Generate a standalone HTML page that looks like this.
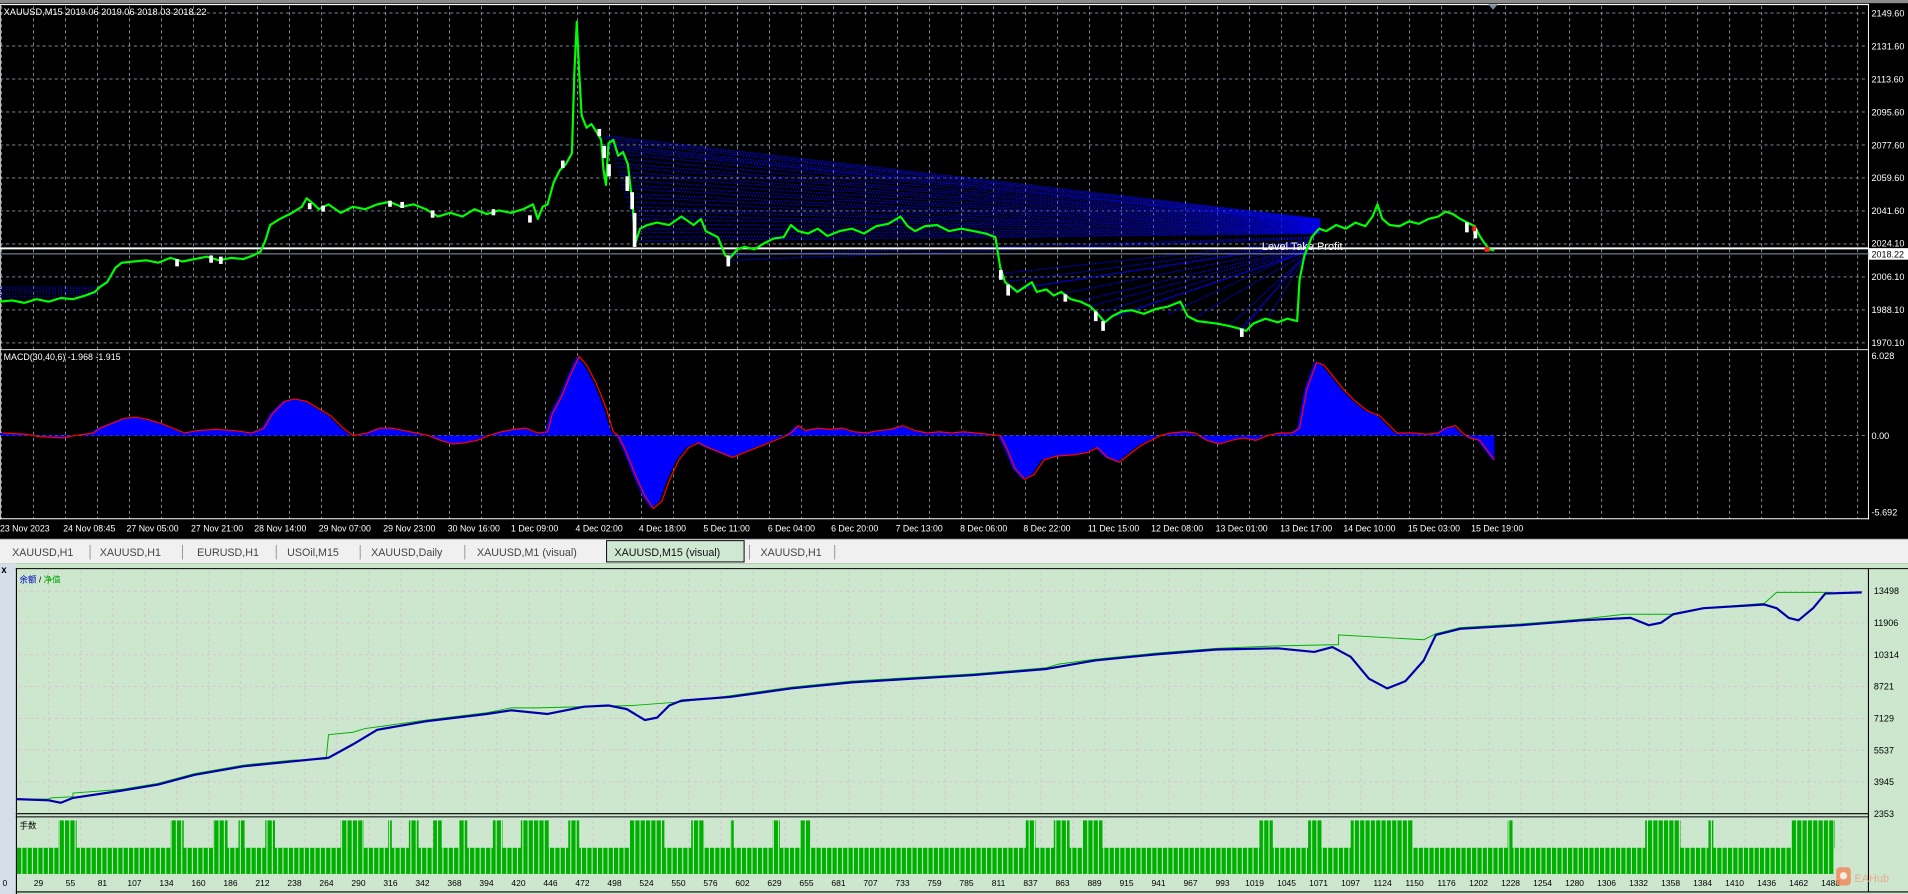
<!DOCTYPE html>
<html><head><meta charset="utf-8"><style>
html,body{margin:0;padding:0;background:#000;overflow:hidden}
svg{display:block}
text{font-family:"Liberation Sans","Noto Sans CJK SC",sans-serif}
</style></head><body>
<svg width="1908" height="894" viewBox="0 0 1568 735" preserveAspectRatio="none" xmlns="http://www.w3.org/2000/svg">
<defs>
<pattern id="gv" x="27.1" y="0" width="26.3" height="5" patternUnits="userSpaceOnUse"><rect x="0" y="0" width="0.8" height="2.5" fill="#7f8c99"/></pattern>
<pattern id="gh" x="0" y="10.3" width="5" height="27.12" patternUnits="userSpaceOnUse"><rect x="0" y="0" width="2.5" height="0.8" fill="#7f8c99"/></pattern>
<pattern id="bv" x="13.4" y="0" width="26.3" height="5" patternUnits="userSpaceOnUse"><rect x="0" y="0" width="0.8" height="2.5" fill="#d7c4cc"/></pattern>
<pattern id="bh" x="0" y="485.6" width="5" height="26.16" patternUnits="userSpaceOnUse"><rect x="0" y="0" width="2.5" height="0.8" fill="#d7c4cc"/></pattern>
<pattern id="vb" x="14" y="0" width="4.38" height="10" patternUnits="userSpaceOnUse"><rect x="0" y="0" width="3.5" height="10" fill="#00b000"/></pattern>
</defs>

<rect x="0" y="0" width="1568" height="444" fill="#000"/>
<rect x="0" y="0" width="1568" height="2.6" fill="#8c8c8c"/>
<rect x="0" y="3.2" width="1536" height="1" fill="#fff"/>
<rect x="0" y="4" width="1535" height="283" fill="url(#gv)"/>
<rect x="0" y="4" width="1535" height="283" fill="url(#gh)"/>
<rect x="0" y="289" width="1535" height="137" fill="url(#gv)"/>
<line x1="0" y1="358" x2="1535" y2="358" stroke="#7f8c99" stroke-width="0.8" stroke-dasharray="2.5 2.5"/>
<line x1="1535.5" y1="4" x2="1535.5" y2="427" stroke="#fff" stroke-width="0.8"/>
<line x1="0" y1="287.5" x2="1536" y2="287.5" stroke="#fff" stroke-width="0.8"/>
<line x1="0" y1="426.5" x2="1536" y2="426.5" stroke="#fff" stroke-width="0.8"/>
<line x1="0.5" y1="4" x2="0.5" y2="427" stroke="#fff" stroke-width="0.6"/>
<polygon points="1223,3.5 1231,3.5 1227,8" fill="#7f8c99"/>

<path d="M0 236L80 236M0 238L80 237M0 240L80 239M0 242L80 241M0 244L80 243" stroke="#0000ff" stroke-width="0.8" stroke-dasharray="1 1.5"/>

<path d="M500 112L1085 180M501 116L1085 180.5M502 119L1085 181M503 123L1085 181.5M504 126L1085 182M505 130L1085 182.5M506 134L1085 183M507 137L1085 183.5M508 141L1085 184M509 144L1085 184.5M510 148L1085 185M511 152L1085 185.5M512 155L1085 186M513 159L1085 186.5M514 162L1085 187M515 166L1085 187.5M516 170L1085 188M517 173L1085 188.5M518 177L1085 189M519 180L1085 189.5M520 184L1085 190M521 188L1085 190.5M522 191L1085 191M523 195L1085 191.5M524 198L1085 192M600 210L1080 195M598 214L1080 196M496 120L1085 183M494 113L1085 181M822 225L1075 198M826 232L1075 199M832 238L1075 200M845 236L1075 201M870 242L1075 202M885 248L1075 203M895 252L1075 204M900 258L1075 205M905 264L1075 206M915 260L1075 207M1018 272L1075 208M1022 270L1072 210M1010 268L1072 211M1040 264L1072 212M960 258L1072 206M980 262L1072 209" stroke="#0000ff" stroke-width="1.1" stroke-dasharray="1 1.3" fill="none"/>

<rect x="0" y="203.4" width="1536" height="1.6" fill="#fff"/>
<line x1="0" y1="208.7" x2="1536" y2="208.7" stroke="#8898a8" stroke-width="0.8"/>
<text x="1037" y="205.5" font-size="9" fill="#fff">Level Take Profit</text>

<polyline fill="none" stroke="#00ff00" stroke-width="1.8" stroke-linejoin="round" points="0,248 10,247 20,249 30,246 40,248 50,245 60,246 70,243 78,240 82,236 88,232 95,220 100,216 110,215 120,214 130,216 140,212 150,215 160,213 170,211 180,214 190,212 200,213 208,210 214,207 218,198 222,185 230,180 240,175 248,170 252,163 258,168 262,172 270,168 280,175 290,170 300,172 310,168 320,166 330,170 340,168 350,172 360,178 370,175 380,178 390,172 400,176 410,173 420,175 430,172 438,168 442,180 446,170 450,168 455,150 460,140 465,135 470,126 472,60 474,18 476,60 478,95 482,105 486,102 490,108 494,115 496,140 498,152 500,118 504,115 508,128 512,125 516,135 520,170 522,200 526,188 532,185 540,183 550,185 560,178 570,185 576,180 580,190 590,195 596,210 600,212 606,205 612,203 620,205 628,200 636,196 644,195 650,185 656,190 664,192 672,188 680,194 690,190 700,188 710,192 720,186 730,184 740,178 746,186 752,190 760,186 770,185 780,190 790,188 800,190 810,192 818,195 822,220 826,232 830,235 836,240 842,236 848,232 852,240 860,238 866,243 872,240 880,246 888,248 896,252 902,258 908,265 914,260 922,256 930,255 940,258 950,254 960,252 970,248 976,260 984,264 992,265 1000,266 1010,268 1018,270 1024,272 1030,266 1040,262 1050,265 1058,262 1066,264 1068,230 1072,210 1078,195 1084,188 1090,190 1098,185 1106,188 1114,183 1122,186 1128,178 1132,168 1136,180 1142,185 1150,186 1158,182 1166,184 1174,180 1182,178 1188,174 1194,176 1200,180 1206,183 1212,186 1216,194 1220,200 1224,205 1228,206"/>
<g fill="#fff">
<rect x="253" y="167" width="3" height="5"/><rect x="264" y="169" width="3" height="5"/><rect x="319" y="165" width="3" height="5"/><rect x="329" y="166" width="3" height="5"/><rect x="354" y="173" width="3" height="6"/><rect x="404" y="172" width="3" height="5"/><rect x="434" y="177" width="3" height="6"/><rect x="461" y="132" width="3" height="6"/><rect x="491" y="106" width="3" height="6"/><rect x="495" y="120" width="3" height="10"/><rect x="499" y="135" width="3" height="10"/><rect x="514" y="145" width="3" height="12"/><rect x="518" y="158" width="3" height="14"/><rect x="520" y="175" width="3" height="28"/><rect x="597" y="210" width="3" height="9"/><rect x="821" y="222" width="3" height="8"/><rect x="827" y="234" width="3" height="9"/><rect x="874" y="242" width="3" height="6"/><rect x="899" y="256" width="3" height="8"/><rect x="905" y="264" width="3" height="8"/><rect x="1019" y="270" width="3" height="7"/><rect x="1204" y="183" width="3" height="8"/><rect x="1211" y="188" width="3" height="8"/><rect x="144" y="213" width="3" height="6"/><rect x="172" y="210" width="3" height="6"/><rect x="180" y="211" width="3" height="6"/>
</g>
<g fill="#ff2020"><rect x="1220" y="203" width="4" height="4"/><rect x="1210" y="186" width="3" height="4"/></g>

<rect x="1536" y="204" width="32" height="9.5" fill="#fff"/>
<text x="1538" y="211.8" font-size="7.4" fill="#000">2018.22</text>

<g font-size="7.5" fill="#fff">
<text x="1538" y="13.5">2149.60</text><text x="1538" y="40.6">2131.60</text><text x="1538" y="67.7">2113.60</text><text x="1538" y="94.8">2095.60</text><text x="1538" y="121.9">2077.60</text><text x="1538" y="149">2059.60</text><text x="1538" y="176.1">2041.60</text><text x="1538" y="202.6">2024.10</text><text x="1538" y="230.4">2006.10</text><text x="1538" y="257.5">1988.10</text><text x="1538" y="284.5">1970.10</text>
<text x="1538" y="295">6.028</text><text x="1538" y="360.8">0.00</text><text x="1538" y="424">-5.692</text>
</g>
<text x="3" y="12.5" font-size="7.6" fill="#fff">XAUUSD,M15  2019.06 2019.06 2018.03 2018.22</text>
<text x="3" y="296" font-size="7.3" fill="#fff">MACD(30,40,6) -1.968 -1.915</text>

<polygon fill="#0000ff" points="0,356 20,357 30,359 50,360 60,358 75,356 80,352 90,348 100,344 110,343 120,345 130,348 140,352 150,356 160,354 175,353 190,354 205,356 215,352 222,340 232,330 240,328 250,330 260,336 270,342 280,352 288,358 300,356 310,352 320,352 330,354 340,356 350,358 360,362 370,365 380,364 390,362 400,358 410,355 420,353 430,352 440,356 448,355 452,340 460,325 466,310 474,293 480,300 488,315 496,335 502,355 506,358 512,370 520,390 528,408 535,418 542,412 548,395 556,378 564,368 572,364 580,368 590,372 600,376 610,372 620,368 630,364 640,360 648,356 654,350 660,354 670,352 680,353 690,352 700,355 710,356 720,354 730,353 740,350 750,354 760,356 770,355 780,356 790,355 800,356 810,357 820,358 826,370 832,385 840,394 848,390 856,378 866,375 880,374 892,372 900,368 908,376 918,380 928,372 936,366 944,362 952,358 960,356 972,355 980,356 990,362 1000,365 1010,362 1020,360 1030,362 1040,358 1050,356 1060,356 1066,352 1072,320 1080,298 1086,300 1094,310 1102,320 1112,330 1122,338 1132,342 1140,350 1146,356 1160,356 1170,357 1180,356 1186,352 1194,350 1200,356 1206,360 1214,362 1220,370 1226,378 1228,378 1228,358 0,358"/>
<polyline fill="none" stroke="#ff0000" stroke-width="1" points="2,356 22,357 32,359 52,360 62,358 77,356 82,352 92,348 102,344 112,343 122,345 132,348 142,352 152,356 162,354 177,353 192,354 207,356 217,352 224,340 234,330 242,328 252,330 262,336 272,342 282,352 290,358 302,356 312,352 322,352 332,354 342,356 352,358 362,362 372,365 382,364 392,362 402,358 412,355 422,353 432,352 442,356 450,355 454,340 462,325 468,310 476,293 482,300 490,315 498,335 504,355 508,358 514,370 522,390 530,408 537,418 544,412 550,395 558,378 566,368 574,364 582,368 592,372 602,376 612,372 622,368 632,364 642,360 650,356 656,350 662,354 672,352 682,353 692,352 702,355 712,356 722,354 732,353 742,350 752,354 762,356 772,355 782,356 792,355 802,356 812,357 822,358 828,370 834,385 842,394 850,390 858,378 868,375 882,374 894,372 902,368 910,376 920,380 930,372 938,366 946,362 954,358 962,356 974,355 982,356 992,362 1002,365 1012,362 1022,360 1032,362 1042,358 1052,356 1062,356 1068,352 1074,320 1082,298 1088,300 1096,310 1104,320 1114,330 1124,338 1134,342 1142,350 1148,356 1162,356 1172,357 1182,356 1188,352 1196,350 1202,356 1208,360 1216,362 1222,370 1228,378"/>

<g font-size="7.2" fill="#fff">
<text x="0" y="437">23 Nov 2023</text><text x="52" y="437">24 Nov 08:45</text><text x="104" y="437">27 Nov 05:00</text><text x="157" y="437">27 Nov 21:00</text><text x="209" y="437">28 Nov 14:00</text><text x="262" y="437">29 Nov 07:00</text><text x="315" y="437">29 Nov 23:00</text><text x="368" y="437">30 Nov 16:00</text><text x="420" y="437">1 Dec 09:00</text><text x="473" y="437">4 Dec 02:00</text><text x="525" y="437">4 Dec 18:00</text><text x="578" y="437">5 Dec 11:00</text><text x="631" y="437">6 Dec 04:00</text><text x="683" y="437">6 Dec 20:00</text><text x="736" y="437">7 Dec 13:00</text><text x="789" y="437">8 Dec 06:00</text><text x="841" y="437">8 Dec 22:00</text><text x="894" y="437">11 Dec 15:00</text><text x="946" y="437">12 Dec 08:00</text><text x="999" y="437">13 Dec 01:00</text><text x="1052" y="437">13 Dec 17:00</text><text x="1104" y="437">14 Dec 10:00</text><text x="1157" y="437">15 Dec 03:00</text><text x="1209" y="437">15 Dec 19:00</text>
</g>

<rect x="0" y="443" width="1568" height="20" fill="#f0f0f0"/>
<line x1="0" y1="443.5" x2="1568" y2="443.5" stroke="#a0a0a0" stroke-width="0.6"/>
<rect x="498.5" y="444.5" width="113" height="17.5" fill="#cfe8d2" stroke="#000" stroke-width="0.8"/>
<g stroke="#8a8a8a" stroke-width="0.7">
<line x1="74" y1="448" x2="74" y2="460"/><line x1="150" y1="448" x2="150" y2="460"/><line x1="227" y1="448" x2="227" y2="460"/><line x1="296" y1="448" x2="296" y2="460"/><line x1="382" y1="448" x2="382" y2="460"/><line x1="616" y1="448" x2="616" y2="460"/><line x1="686" y1="448" x2="686" y2="460"/>
</g>
<g font-size="8.8" fill="#444">
<text x="10" y="457">XAUUSD,H1</text><text x="82" y="457">XAUUSD,H1</text><text x="162" y="457">EURUSD,H1</text><text x="236" y="457">USOil,M15</text><text x="305" y="457">XAUUSD,Daily</text><text x="392" y="457">XAUUSD,M1 (visual)</text><text x="505" y="457" fill="#111">XAUUSD,M15 (visual)</text><text x="625" y="457">XAUUSD,H1</text>
</g>

<rect x="0" y="463" width="1568" height="272" fill="#cde7cf"/>
<rect x="0" y="463" width="13" height="272" fill="#d5dee9"/>
<text x="1" y="471" font-size="8" font-weight="bold" fill="#000">x</text>
<line x1="13" y1="467.5" x2="1568" y2="467.5" stroke="#000" stroke-width="0.9"/>
<line x1="13.5" y1="467" x2="13.5" y2="735" stroke="#000" stroke-width="0.9"/>
<rect x="14" y="468" width="1521" height="201" fill="url(#bv)"/>
<rect x="14" y="468" width="1521" height="201" fill="url(#bh)"/>
<rect x="14" y="672" width="1521" height="47" fill="url(#bv)"/>
<line x1="1535.5" y1="467" x2="1535.5" y2="733" stroke="#000" stroke-width="0.9"/>
<line x1="13" y1="669" x2="1536" y2="669" stroke="#000" stroke-width="0.9"/>
<line x1="13" y1="671.6" x2="1536" y2="671.6" stroke="#000" stroke-width="0.9"/>
<line x1="13" y1="733.3" x2="1568" y2="733.3" stroke="#000" stroke-width="0.9"/>
<text x="16" y="479" font-size="7"><tspan fill="#0000c0">余额</tspan><tspan fill="#000"> / </tspan><tspan fill="#00a000">净值</tspan></text>
<text x="16" y="681" font-size="7" fill="#000">手数</text>

<polyline fill="none" stroke="#00b000" stroke-width="0.8" points="14,657 40,657 42,656 60,655 60,652 100,649 130,644 160,636 200,629 240,625 268,624 270,604 290,602 300,599 350,592 400,586 420,582 440,582 520,580 560,577 600,572 650,565 700,560 750,557 800,554 860,549 870,546 900,542 950,537 1000,533 1050,531 1100,530 1100,522 1170,526 1180,521 1200,516 1250,513 1300,509 1335,505 1375,505 1400,500 1450,496 1460,487 1505,487"/>
<polyline fill="none" stroke="#0000aa" stroke-width="1.8" stroke-linejoin="round" points="14,657 40,658 50,660 60,656 100,650 130,645 160,637 200,630 240,626 270,623 290,612 310,600 350,593 400,587 420,584 450,587 480,581 500,580 515,583 530,592 540,590 550,580 560,576 600,573 650,566 700,561 750,558 800,555 860,550 900,543 950,538 1000,534 1050,533 1080,536 1095,532 1110,540 1125,558 1140,566 1155,560 1170,543 1180,522 1200,517 1250,514 1300,510 1340,508 1355,514 1365,512 1375,505 1400,500 1450,497 1460,500 1470,508 1478,510 1490,500 1500,488 1530,487"/>

<rect x="14" y="697" width="1493" height="21.5" fill="url(#vb)"/>
<g fill="url(#vb)">
<rect x="48" y="674.5" width="15" height="23"/><rect x="140" y="674.5" width="11" height="23"/><rect x="175" y="674.5" width="12" height="23"/><rect x="196" y="674.5" width="5" height="23"/><rect x="218" y="674.5" width="8" height="23"/><rect x="280" y="674.5" width="19" height="23"/><rect x="319" y="674.5" width="3" height="23"/><rect x="336" y="674.5" width="8" height="23"/><rect x="356" y="674.5" width="7" height="23"/><rect x="377" y="674.5" width="7" height="23"/><rect x="405" y="674.5" width="8" height="23"/><rect x="428" y="674.5" width="23" height="23"/><rect x="467" y="674.5" width="9" height="23"/><rect x="517" y="674.5" width="29" height="23"/><rect x="568" y="674.5" width="11" height="23"/><rect x="600" y="674.5" width="3" height="23"/><rect x="635" y="674.5" width="6" height="23"/><rect x="658" y="674.5" width="8" height="23"/><rect x="843" y="674.5" width="8" height="23"/><rect x="866" y="674.5" width="13" height="23"/><rect x="890" y="674.5" width="16" height="23"/><rect x="1035" y="674.5" width="11" height="23"/><rect x="1075" y="674.5" width="11" height="23"/><rect x="1110" y="674.5" width="51" height="23"/><rect x="1239" y="674.5" width="4" height="23"/><rect x="1352" y="674.5" width="29" height="23"/><rect x="1404" y="674.5" width="4" height="23"/><rect x="1472" y="674.5" width="36" height="23"/>
</g>

<g font-size="7.4" fill="#000">
<text x="1540" y="488.5">13498</text><text x="1540" y="514.7">11906</text><text x="1540" y="540.8">10314</text><text x="1540" y="567">8721</text><text x="1540" y="593.1">7129</text><text x="1540" y="619.3">5537</text><text x="1540" y="645.5">3945</text><text x="1540" y="671.6">2353</text>
</g>
<g font-size="7" fill="#000" text-anchor="middle">
<text x="4" y="728.5">0</text><text x="31.6" y="728.5">29</text><text x="57.9" y="728.5">55</text><text x="84.2" y="728.5">81</text><text x="110.5" y="728.5">107</text><text x="136.8" y="728.5">134</text><text x="163.1" y="728.5">160</text><text x="189.4" y="728.5">186</text><text x="215.7" y="728.5">212</text><text x="242" y="728.5">238</text><text x="268.3" y="728.5">264</text><text x="294.6" y="728.5">290</text><text x="320.9" y="728.5">316</text><text x="347.2" y="728.5">342</text><text x="373.5" y="728.5">368</text><text x="399.8" y="728.5">394</text><text x="426.1" y="728.5">420</text><text x="452.4" y="728.5">446</text><text x="478.7" y="728.5">472</text><text x="505" y="728.5">498</text><text x="531.3" y="728.5">524</text><text x="557.6" y="728.5">550</text><text x="583.9" y="728.5">576</text><text x="610.2" y="728.5">602</text><text x="636.5" y="728.5">629</text><text x="662.8" y="728.5">655</text><text x="689.1" y="728.5">681</text><text x="715.4" y="728.5">707</text><text x="741.7" y="728.5">733</text><text x="768" y="728.5">759</text><text x="794.3" y="728.5">785</text><text x="820.6" y="728.5">811</text><text x="846.9" y="728.5">837</text><text x="873.2" y="728.5">863</text><text x="899.5" y="728.5">889</text><text x="925.8" y="728.5">915</text><text x="952.1" y="728.5">941</text><text x="978.4" y="728.5">967</text><text x="1004.7" y="728.5">993</text><text x="1031" y="728.5">1019</text><text x="1057.3" y="728.5">1045</text><text x="1083.6" y="728.5">1071</text><text x="1109.9" y="728.5">1097</text><text x="1136.2" y="728.5">1124</text><text x="1162.5" y="728.5">1150</text><text x="1188.8" y="728.5">1176</text><text x="1215.1" y="728.5">1202</text><text x="1241.4" y="728.5">1228</text><text x="1267.7" y="728.5">1254</text><text x="1294" y="728.5">1280</text><text x="1320.3" y="728.5">1306</text><text x="1346.6" y="728.5">1332</text><text x="1372.9" y="728.5">1358</text><text x="1399.2" y="728.5">1384</text><text x="1425.5" y="728.5">1410</text><text x="1451.8" y="728.5">1436</text><text x="1478.1" y="728.5">1462</text><text x="1504.4" y="728.5">1488</text>
</g>

<rect x="1509" y="713" width="12" height="15" rx="3" fill="#f08a5a" opacity="0.85"/>
<circle cx="1515" cy="720" r="3" fill="#fff" opacity="0.8"/>
<text x="1524" y="725" font-size="9" fill="#f0a080" opacity="0.85">EAHub</text>
</svg>
</body></html>
